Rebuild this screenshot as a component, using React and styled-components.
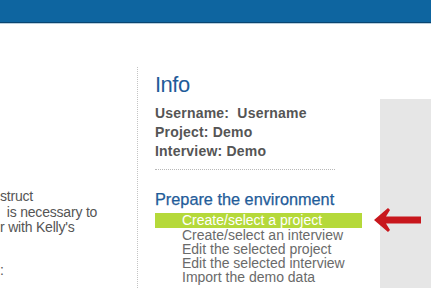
import React from "react";
import styled, { createGlobalStyle } from "styled-components";

const Global = createGlobalStyle`
  html, body { margin: 0; padding: 0; background: #fff; }
  body { font-family: "Liberation Sans", Arial, sans-serif; overflow: hidden; }
`;

const Page = styled.div`
  position: relative;
  width: 431px;
  height: 288px;
  overflow: hidden;
`;

const Header = styled.div`
  height: 22px;
  background: #0e65a0;
  border-bottom: 1px solid #0a4570;
  box-shadow: 0 1px 0 #b9cfdd;
`;

const Main = styled.div`
  display: flex;
  align-items: flex-start;
  height: 265px;
`;

const LeftCol = styled.div`
  width: 137px;
  flex: none;
  padding-top: 166px;
  overflow: hidden;
`;

const LeftText = styled.p`
  margin: ${(p) => (p.$gap ? "27px 0 0" : "0")};
  white-space: pre;
  font-size: 14px;
  line-height: 15.5px;
  color: #555;
  letter-spacing: -0.2px;
`;

const MidCol = styled.div`
  margin-top: 44px;
  align-self: stretch;
  border-left: 1px dotted #c4c4c4;
  padding-left: 17px;
  width: 207px;
  flex: none;
`;

const Title = styled.h1`
  margin: 5px 0 0;
  font-size: 22px;
  font-weight: normal;
  color: #1f5c99;
  line-height: 26px;
  letter-spacing: -0.5px;
`;

const InfoLine = styled.div`
  font-size: 14px;
  font-weight: bold;
  color: #555;
  line-height: 19px;
  letter-spacing: 0.2px;
`;

const InfoList = styled.div`
  margin-top: 6px;
`;

const Divider = styled.div`
  margin: 8px 27px 0 0;
  border-top: 1px dotted #b8b8b8;
`;

const SubTitle = styled.h2`
  margin: 19px 0 0;
  font-size: 16.3px;
  font-weight: normal;
  color: #1f5c99;
  line-height: 20px;
  -webkit-text-stroke: 0.25px #1f5c99;
`;

const Menu = styled.ul`
  list-style: none;
  margin: 4px 0 0;
  padding: 0;
`;

const MenuItem = styled.li`
  font-size: 14px;
  line-height: ${(p) => (p.$active ? "15px" : "14px")};
  padding-left: 27px;
  color: ${(p) => (p.$active ? "#fff" : "#6a6a6a")};
  background: ${(p) => (p.$active ? "#b5d93a" : "transparent")};
`;

const Side = styled.div`
  flex: 1;
  margin-left: 18px;
  margin-top: 76px;
  align-self: stretch;
  background: #e6e6e6;
`;

const Arrow = styled.svg`
  position: absolute;
  left: 373px;
  top: 207px;
`;

export default function App() {
  return (
    <Page>
      <Global />
      <Header />
      <Main>
        <LeftCol>
          <LeftText>{"struct\n\u2002is necessary to\nr with Kelly's"}</LeftText>
          <LeftText $gap>:</LeftText>
        </LeftCol>
        <MidCol>
          <Title>Info</Title>
          <InfoList>
            <InfoLine>Username:&nbsp; Username</InfoLine>
            <InfoLine>Project: Demo</InfoLine>
            <InfoLine>Interview: Demo</InfoLine>
          </InfoList>
          <Divider />
          <SubTitle>Prepare the environment</SubTitle>
          <Menu>
            <MenuItem $active>Create/select a project</MenuItem>
            <MenuItem>Create/select an interview</MenuItem>
            <MenuItem>Edit the selected project</MenuItem>
            <MenuItem>Edit the selected interview</MenuItem>
            <MenuItem>Import the demo data</MenuItem>
          </Menu>
        </MidCol>
        <Side />
      </Main>
      <Arrow width="50" height="27" viewBox="0 0 50 27">
        <polygon
          points="1,13 15,1 17,3 13,9.5 48,9.5 48,16.5 13,16.5 17,23 15,25"
          fill="#c8171d"
        />
      </Arrow>
    </Page>
  );
}
